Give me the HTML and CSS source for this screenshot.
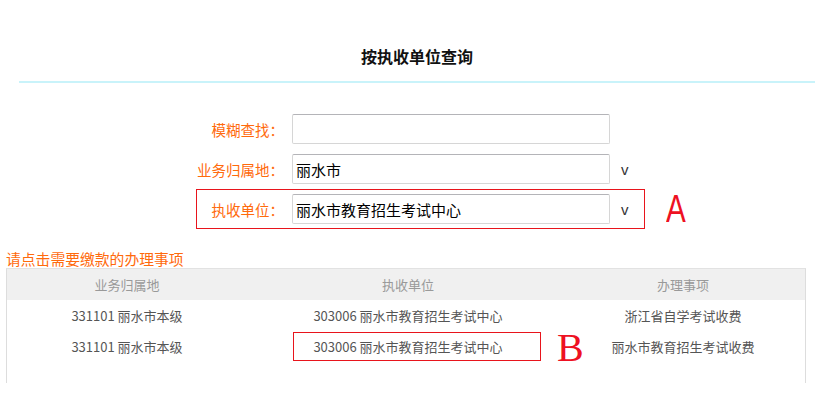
FILE: index.html
```html
<!DOCTYPE html>
<html lang="zh-CN">
<head>
    <meta charset="UTF-8">
    <title>按执收单位查询</title>
    <link rel="stylesheet" href="styles.css">
</head>
<body>
    <header class="page-head">
        <h1>按执收单位查询</h1>
    </header>

    <form class="query-form">
        <div class="form-row">
            <label for="keyword">模糊查找：</label>
            <input type="text" id="keyword">
        </div>
        <div class="form-row">
            <label for="area">业务归属地：</label>
            <input type="text" id="area" value="丽水市">
            <span class="arrow">v</span>
        </div>
        <div class="mark-line">
            <div class="form-row boxed">
                <label for="unit">执收单位：</label>
                <input type="text" id="unit" value="丽水市教育招生考试中心">
                <span class="arrow">v</span>
            </div>
            <span class="mark mark-a">A</span>
        </div>
    </form>

    <p class="hint">请点击需要缴款的办理事项</p>
    <div class="result">
        <table>
            <thead>
                <tr>
                    <th class="c1">业务归属地</th>
                    <th class="c2">执收单位</th>
                    <th class="c3">办理事项</th>
                </tr>
            </thead>
            <tbody>
                <tr>
                    <td>331101 丽水市本级</td>
                    <td>303006 丽水市教育招生考试中心</td>
                    <td>浙江省自学考试收费</td>
                </tr>
                <tr>
                    <td>331101 丽水市本级</td>
                    <td class="picked"><span class="pick-box"></span>303006 丽水市教育招生考试中心<span class="mark mark-b">B</span></td>
                    <td>丽水市教育招生考试收费</td>
                </tr>
            </tbody>
        </table>
    </div>
</body>
</html>
```

FILE: styles.css
```css
body {
    margin: 0;
    font-family: "Noto Sans CJK SC", "Noto Sans", sans-serif;
    background: #ffffff;
    color: #333333;
}

.page-head {
    margin: 0 4px 0 19px;
    height: 83px;
    border-bottom: 2px solid #c9f3fa;
    box-sizing: border-box;
    padding-top: 44px;
    text-align: center;
}

.page-head h1 {
    margin: 0;
    font-size: 16px;
    font-weight: bold;
    line-height: 24px;
    color: #111111;
}

.query-form {
    padding: 26px 0 0 196px;
}

.form-row {
    display: flex;
    align-items: center;
    width: 449px;
    height: 40px;
    box-sizing: border-box;
    border: 1px solid transparent;
}

.form-row label {
    flex: 0 0 87px;
    white-space: nowrap;
    text-align: right;
    font-size: 14.5px;
    color: #ff6a0c;
}

.form-row input {
    margin-left: 8px;
    flex: 0 0 318px;
    height: 30px;
    box-sizing: border-box;
    border: 1px solid #d6d6d6;
    border-top-color: #b4b4b8;
    border-radius: 2px;
    padding: 0 0 0 3px;
    font-family: "Noto Sans CJK SC", sans-serif;
    font-size: 15px;
    color: #000000;
}

.arrow {
    margin-left: 11px;
    font-family: "Liberation Sans", sans-serif;
    font-size: 15px;
    color: #333333;
}

.boxed {
    border-color: #e8141c;
}

.mark-line {
    display: flex;
    align-items: center;
}

.mark {
    font-family: "Liberation Sans", sans-serif;
    color: #ee1122;
}

.mark-a {
    margin-left: 21px;
    font-size: 38px;
    line-height: 40px;
    display: inline-block;
    transform: scaleX(0.78);
    transform-origin: left center;
}

.hint {
    margin: 21px 0 0 6px;
    font-size: 14.8px;
    line-height: 18px;
    color: #ff6a0c;
}

/* 表头底色铺满整个结果框 */
.result {
    margin: 0 0 0 6px;
    width: 800px;
    height: 115px;
    box-sizing: border-box;
    border-left: 1px solid #dddddd;
    border-right: 1px solid #dddddd;
    border-top: 1px solid #e2e2e2;
    background: linear-gradient(#f0f0f0 31px, #ffffff 31px);
}

table {
    width: 790px;
    border-collapse: collapse;
    table-layout: fixed;
}

th, td {
    padding: 0;
    height: 31px;
    text-align: center;
    font-size: 13px;
    font-weight: normal;
}

thead th {
    color: #999999;
}

tbody td {
    color: #555555;
}

.c1 { width: 240px; }
.c2 { width: 322px; }
.c3 { width: 228px; }

.picked {
    position: relative;
}

.pick-box {
    position: absolute;
    left: 46px;
    top: 1px;
    width: 248px;
    height: 29px;
    box-sizing: border-box;
    border: 1px solid #e8141c;
}

.mark-b {
    position: absolute;
    left: 310px;
    top: -1px;
    font-family: "Liberation Serif", serif;
    font-size: 40px;
    line-height: 36px;
}
```
